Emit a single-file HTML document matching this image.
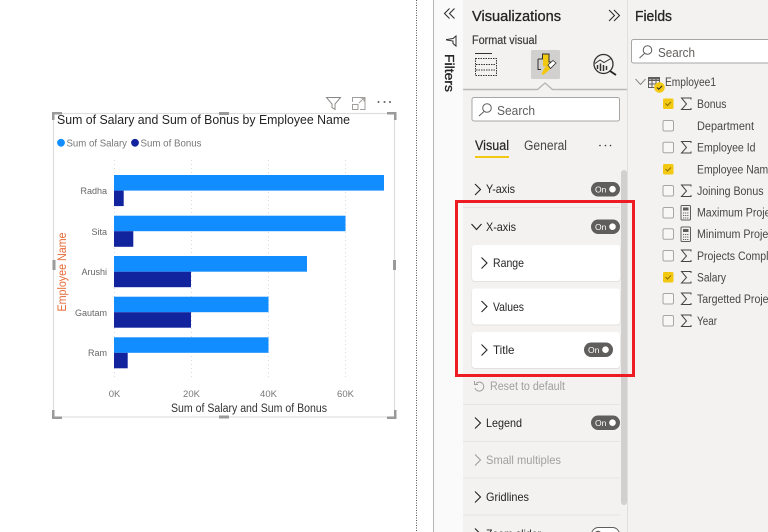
<!DOCTYPE html>
<html><head><meta charset="utf-8"><style>
html,body{margin:0;padding:0;background:#fff}
svg{display:block}
text{font-family:"Liberation Sans",sans-serif}
.t{font-size:12px;fill:#252423}
.f{font-size:11.500px;fill:#484644}
.on{font-size:8.500px;fill:#fff}
.ch{fill:none;stroke:#252423;stroke-width:1.100}
.box{fill:#f8f7f6;stroke:#a8a6a4;stroke-width:1}
.sg{fill:none;stroke:#484644;stroke-width:1}
</style></head><body>
<svg width="768" height="532" viewBox="0 0 768 532" xmlns="http://www.w3.org/2000/svg">
<rect width="768" height="532" fill="#fff"/>
<!-- canvas separator -->
<line x1="416.500" y1="0" x2="416.500" y2="532" stroke="#555" stroke-dasharray="1 1.500"/>
<rect x="433" y="0" width="30" height="532" fill="#fafafa"/>
<line x1="433.500" y1="0" x2="433.500" y2="532" stroke="#b5b5b5"/>
<rect x="463" y="0" width="305" height="532" fill="#f3f2f1"/>
<line x1="627.500" y1="0" x2="627.500" y2="532" stroke="#e1dfdd"/>

<!-- visual header -->
<path d="M326.500 97.500H340.500L335 104V109.500L332 107.500V104Z" fill="none" stroke="#8a8886"/>
<path d="M352.500 102V97.500H365V109.500H360M352.500 104.500H358V109.500H352.500ZM359 103L364 98M360.500 98H364V101.500" fill="none" stroke="#a19f9d"/>
<circle cx="378.500" cy="102" r="1" fill="#605e5c"/><circle cx="384.500" cy="102" r="1" fill="#605e5c"/><circle cx="390" cy="102" r="1" fill="#605e5c"/>

<!-- visual border -->
<rect x="53.500" y="113.500" width="341" height="303.500" fill="#fff" stroke="#dedede" stroke-width="1.200"/>
<g fill="#9a9a9a">
<path d="M52 112H62V114.500H54.500V120H52Z"/>
<path d="M396.500 112H387V114.500H394V120H396.500Z"/>
<path d="M52 419H62V416.500H54.500V410H52Z"/>
<path d="M396.500 419H387V416.500H394V410H396.500Z"/>
<rect x="219" y="112" width="10" height="3"/>
<rect x="219" y="415.500" width="10" height="3"/>
<rect x="52.500" y="260" width="3" height="10"/>
<rect x="393" y="260" width="3" height="10"/>
</g>

<!-- chart text -->
<text x="57" y="124" font-size="13" fill="#252423" textLength="293" lengthAdjust="spacingAndGlyphs">Sum of Salary and Sum of Bonus by Employee Name</text>
<circle cx="61" cy="142.800" r="3.900" fill="#118dff"/>
<text x="66.500" y="146.500" font-size="10.500" fill="#777" textLength="60.500" lengthAdjust="spacingAndGlyphs">Sum of Salary</text>
<circle cx="135" cy="142.800" r="3.900" fill="#12239e"/>
<text x="140.500" y="146.500" font-size="10.500" fill="#777" textLength="61" lengthAdjust="spacingAndGlyphs">Sum of Bonus</text>

<!-- gridlines -->
<g stroke="#dcdcdc" stroke-dasharray="1 3">
<line x1="114.500" y1="160" x2="114.500" y2="380"/>
<line x1="191.500" y1="160" x2="191.500" y2="380"/>
<line x1="268.500" y1="160" x2="268.500" y2="380"/>
<line x1="345.500" y1="160" x2="345.500" y2="380"/>
</g>
<!-- bars -->
<g fill="#118dff">
<rect x="114" y="175" width="270" height="15.600"/>
<rect x="114" y="215.700" width="231.500" height="15.500"/>
<rect x="114" y="256" width="193" height="15.700"/>
<rect x="114" y="296.700" width="154.500" height="15.500"/>
<rect x="114" y="337.300" width="154.500" height="15.500"/>
</g>
<g fill="#12239e">
<rect x="114" y="190.600" width="9.700" height="15.500"/>
<rect x="114" y="231.200" width="19.300" height="15.600"/>
<rect x="114" y="271.700" width="77" height="15.500"/>
<rect x="114" y="312.200" width="77" height="15.500"/>
<rect x="114" y="352.800" width="13.700" height="15.500"/>
</g>
<g font-size="9" fill="#666" text-anchor="end">
<text x="107" y="194">Radha</text>
<text x="107" y="235">Sita</text>
<text x="107" y="275">Arushi</text>
<text x="107" y="316">Gautam</text>
<text x="107" y="356">Ram</text>
</g>
<g font-size="9.500" fill="#777" text-anchor="middle">
<text x="114.500" y="397">0K</text>
<text x="191.500" y="397">20K</text>
<text x="268.500" y="397">40K</text>
<text x="345.500" y="397">60K</text>
</g>
<text x="171" y="412" font-size="11.500" fill="#333" textLength="156" lengthAdjust="spacingAndGlyphs">Sum of Salary and Sum of Bonus</text>
<text transform="translate(66,311.500) rotate(-90)" font-size="11.500" fill="#e66c37" textLength="79" lengthAdjust="spacingAndGlyphs">Employee Name</text>

<!-- filters pane -->
<path d="M449.500 8.500L444.500 13.500L449.500 18.500M454.500 8.500L449.500 13.500L454.500 18.500" fill="none" stroke="#323130" stroke-width="1.100"/>
<path d="M456 36V46L453 43.500V41L446.500 40V39.500L453 38.500Z" fill="none" stroke="#323130"/>
<text transform="translate(445,54) rotate(90)" font-size="13" fill="#252423" stroke="#252423" stroke-width=".35" textLength="38" lengthAdjust="spacingAndGlyphs">Filters</text>

<!-- viz pane head -->
<text x="472" y="21" font-size="15" fill="#252423" stroke="#252423" stroke-width=".3" textLength="89" lengthAdjust="spacingAndGlyphs">Visualizations</text>
<path d="M609 10L614.500 15.500L609 21M614 10L619.500 15.500L614 21" fill="none" stroke="#252423"/>
<text x="472" y="44" font-size="11.500" fill="#3b3a39" stroke="#3b3a39" stroke-width=".2" textLength="65" lengthAdjust="spacingAndGlyphs">Format visual</text>

<!-- tab icons -->
<path d="M475 53.500H492" stroke="#323130" fill="none"/>
<rect x="475.500" y="58.500" width="21" height="17" fill="none" stroke="#323130" stroke-dasharray="1.500 1"/>
<path d="M476 64.500H496M476 70H496" stroke="#323130" fill="none" stroke-dasharray="1.500 1"/>
<rect x="531" y="50" width="29" height="29" rx="1.500" fill="#d2d0ce"/>
<path d="M538 59H542.500V54H549V62H554V65" fill="none" stroke="#323130"/>
<path d="M538 59V69.500H541" fill="none" stroke="#323130"/>
<rect x="543" y="54.500" width="5.500" height="12" fill="#f2c811"/>
<path d="M541.500 74L544 68.500L551 62.500L554 65L547 72L543 75Z" fill="#f2c811"/>
<path d="M548 65L553 60.500L556 63L550.500 68.500Z" fill="#fff" stroke="#323130" stroke-width=".8"/>
<circle cx="603.500" cy="64" r="9.500" fill="none" stroke="#323130" stroke-width="1.300"/>
<path d="M597.500 69V65M600.500 71V63.500M603.500 71V65M606.500 70V66" stroke="#323130" stroke-width="1.500" fill="none"/>
<path d="M595 63.500L600 60L604 62.500L611 58.500" stroke="#323130" fill="none"/>
<path d="M610 71L616 75" stroke="#252423" stroke-width="1.800"/>

<!-- tab line with notch -->
<path d="M463 89.500H537.500L545 83L552.500 89.500H627" fill="#f3f2f1" stroke="#b9b7b5" stroke-width="1.400"/>

<!-- viz search -->
<rect x="472" y="97.500" width="147.500" height="23.500" rx="2" fill="#fff" stroke="#a8a6a4"/>
<circle cx="487" cy="108" r="4.300" fill="none" stroke="#605e5c"/><path d="M484 111.500L479 116" stroke="#605e5c"/>
<text x="497" y="115" font-size="13" fill="#605e5c" textLength="38" lengthAdjust="spacingAndGlyphs">Search</text>

<text x="475" y="150" font-size="13.500" fill="#252423" stroke="#252423" stroke-width=".2" textLength="34" lengthAdjust="spacingAndGlyphs">Visual</text>
<rect x="475" y="156" width="34" height="2" fill="#f2c811"/>
<text x="524" y="150" font-size="13.500" fill="#484644" textLength="43" lengthAdjust="spacingAndGlyphs">General</text>
<circle cx="600" cy="145.500" r=".8" fill="#323130"/><circle cx="605.500" cy="145.500" r=".8" fill="#323130"/><circle cx="610.500" cy="145.500" r=".8" fill="#323130"/>

<!-- scrollbar -->
<rect x="621" y="170" width="6" height="335" rx="3" fill="#d2d0ce"/>

<!-- Y-axis -->
<path class="ch" d="M475 184L480.500 189.500L475 195"/>
<text class="t" x="486" y="193" textLength="29" lengthAdjust="spacingAndGlyphs">Y-axis</text>
<rect x="591" y="182" width="29" height="14.500" rx="7.200" fill="#605e5c"/><text class="on" x="595" y="192.500">On</text><circle cx="612.500" cy="189.200" r="3.300" fill="#fff"/>
<line x1="463" y1="207.500" x2="620" y2="207.500" stroke="#e6e4e2"/>

<!-- X-axis -->
<path class="ch" d="M471.500 224L476.500 229.500L481.500 224"/>
<text class="t" x="486" y="231" textLength="30" lengthAdjust="spacingAndGlyphs">X-axis</text>
<rect x="591" y="219.500" width="29" height="14.500" rx="7.200" fill="#605e5c"/><text class="on" x="595" y="230">On</text><circle cx="612.500" cy="226.700" r="3.300" fill="#fff"/>

<!-- cards -->
<g fill="#e4e2e0">
<rect x="471.500" y="246" width="149" height="36" rx="3"/>
<rect x="471.500" y="289.500" width="149" height="36" rx="3"/>
<rect x="471.500" y="333" width="149" height="36" rx="3"/>
</g>
<g fill="#fff">
<rect x="472" y="245" width="148" height="36" rx="3"/>
<rect x="472" y="288.500" width="148" height="36" rx="3"/>
<rect x="472" y="332" width="148" height="36" rx="3"/>
</g>
<path class="ch" d="M481.500 257.500L487 263L481.500 268.500"/>
<text class="t" x="493" y="267" textLength="31" lengthAdjust="spacingAndGlyphs">Range</text>
<path class="ch" d="M481.500 301L487 306.500L481.500 312"/>
<text class="t" x="493" y="311" textLength="31" lengthAdjust="spacingAndGlyphs">Values</text>
<path class="ch" d="M481.500 344.500L487 350L481.500 355.500"/>
<text class="t" x="493" y="354" textLength="21.500" lengthAdjust="spacingAndGlyphs">Title</text>
<rect x="584" y="342.500" width="29" height="14.500" rx="7.200" fill="#605e5c"/><text class="on" x="588" y="353">On</text><circle cx="605.500" cy="349.700" r="3.300" fill="#fff"/>

<!-- red highlight -->
<rect x="456.500" y="201.500" width="177" height="174" fill="none" stroke="#ed1c24" stroke-width="3"/>

<!-- reset -->
<path d="M476 383.500A4.500 4.500 0 1 1 475 388M474.500 381V384.500H478" fill="none" stroke="#a19f9d"/>
<text x="490" y="390" font-size="11.500" fill="#a19f9d" textLength="75" lengthAdjust="spacingAndGlyphs">Reset to default</text>
<line x1="463" y1="404.500" x2="620" y2="404.500" stroke="#e6e4e2"/>

<!-- Legend -->
<path class="ch" d="M475 417.500L480.500 423L475 428.500"/>
<text class="t" x="486" y="427" textLength="36" lengthAdjust="spacingAndGlyphs">Legend</text>
<rect x="591" y="415.500" width="29" height="14.500" rx="7.200" fill="#605e5c"/><text class="on" x="595" y="426">On</text><circle cx="612.500" cy="422.700" r="3.300" fill="#fff"/>
<line x1="463" y1="441.500" x2="620" y2="441.500" stroke="#e6e4e2"/>

<path d="M475 454.500L480.500 460L475 465.500" fill="none" stroke="#a19f9d" stroke-width="1.100"/>
<text x="486" y="464" font-size="12" fill="#a19f9d" textLength="75" lengthAdjust="spacingAndGlyphs">Small multiples</text>
<line x1="463" y1="478" x2="620" y2="478" stroke="#e6e4e2"/>

<path class="ch" d="M475 491.500L480.500 497L475 502.500"/>
<text class="t" x="486" y="501" textLength="43" lengthAdjust="spacingAndGlyphs">Gridlines</text>
<line x1="463" y1="515" x2="620" y2="515" stroke="#e6e4e2"/>

<path class="ch" d="M475 528.500L480.500 534"/>
<text class="t" x="486" y="538" textLength="55" lengthAdjust="spacingAndGlyphs">Zoom slider</text>
<rect x="591.500" y="527.500" width="28" height="14" rx="7" fill="#fff" stroke="#605e5c"/><circle cx="598" cy="534" r="3.300" fill="#605e5c"/>

<!-- Fields -->
<text x="635" y="21" font-size="15" fill="#252423" stroke="#252423" stroke-width=".3" textLength="37" lengthAdjust="spacingAndGlyphs">Fields</text>
<rect x="631.500" y="39.500" width="150" height="23.500" rx="2" fill="#fff" stroke="#a8a6a4"/>
<circle cx="647.500" cy="50" r="4.300" fill="none" stroke="#605e5c"/><path d="M644.500 53.500L639.500 58" stroke="#605e5c"/>
<text x="658" y="57" font-size="13" fill="#605e5c" textLength="37" lengthAdjust="spacingAndGlyphs">Search</text>

<path d="M635.500 79L640.500 84.500L645.500 79" fill="none" stroke="#8a8886"/>
<rect x="648.500" y="77.500" width="11" height="10" fill="none" stroke="#605e5c"/>
<path d="M648.500 80.500H659.500M648.500 84H659.500M652 78V88M656 78V88" stroke="#605e5c" fill="none"/>
<rect x="648.500" y="77" width="11" height="2.500" fill="#605e5c"/>
<circle cx="659.500" cy="87.500" r="5.300" fill="#f2c811"/>
<path d="M657 87.500L658.800 89.300L662 86" fill="none" stroke="#252423"/>
<text class="f" x="665" y="86" textLength="51" lengthAdjust="spacingAndGlyphs">Employee1</text>

<!-- checkboxes -->
<g>
<rect x="663" y="98.500" width="10.500" height="10.500" rx="1.500" fill="#f2c811"/><path d="M665.500 103.500L667.500 105.500L671 102" fill="none" stroke="#8a6d00"/>
<rect class="box" x="663" y="120.500" width="10.500" height="10.500" rx="1.500"/>
<rect class="box" x="663" y="142.200" width="10.500" height="10.500" rx="1.500"/>
<rect x="663" y="164" width="10.500" height="10.500" rx="1.500" fill="#f2c811"/><path d="M665.500 169L667.500 171L671 167.500" fill="none" stroke="#8a6d00"/>
<rect class="box" x="663" y="185.500" width="10.500" height="10.500" rx="1.500"/>
<rect class="box" x="663" y="207.500" width="10.500" height="10.500" rx="1.500"/>
<rect class="box" x="663" y="228.800" width="10.500" height="10.500" rx="1.500"/>
<rect class="box" x="663" y="250.500" width="10.500" height="10.500" rx="1.500"/>
<rect x="663" y="272" width="10.500" height="10.500" rx="1.500" fill="#f2c811"/><path d="M665.500 277L667.500 279L671 275.500" fill="none" stroke="#8a6d00"/>
<rect class="box" x="663" y="293.500" width="10.500" height="10.500" rx="1.500"/>
<rect class="box" x="663" y="315.500" width="10.500" height="10.500" rx="1.500"/>
</g>
<!-- sigma icons -->
<g class="sg">
<path d="M691 99.500V98H681.500L686.500 104L681.500 109.500H691V108"/>
<path d="M691 143V141.500H681.500L686.500 147.500L681.500 153H691V151.500"/>
<path d="M691 186.500V185H681.500L686.500 191L681.500 196.500H691V195"/>
<path d="M691 251.500V250H681.500L686.500 256L681.500 261.500H691V260"/>
<path d="M691 273V271.500H681.500L686.500 277.500L681.500 283H691V281.500"/>
<path d="M691 294.500V293H681.500L686.500 299L681.500 304.500H691V303"/>
<path d="M691 316.500V315H681.500L686.500 321L681.500 326.500H691V325"/>
</g>
<!-- calculators -->
<g>
<rect x="681" y="205.500" width="9.500" height="14.500" rx="1" fill="none" stroke="#605e5c"/>
<rect x="683" y="207.500" width="5.500" height="3" fill="#605e5c"/>
<path d="M683 213H688.500M683 215.500H688.500M683 218H688.500" stroke="#605e5c" stroke-dasharray="1.200 .9"/>
<rect x="681" y="227" width="9.500" height="14.500" rx="1" fill="none" stroke="#605e5c"/>
<rect x="683" y="229" width="5.500" height="3" fill="#605e5c"/>
<path d="M683 234.500H688.500M683 237H688.500M683 239.500H688.500" stroke="#605e5c" stroke-dasharray="1.200 .9"/>
</g>
<g>
<text class="f" x="697" y="108" textLength="29.500" lengthAdjust="spacingAndGlyphs">Bonus</text>
<text class="f" x="697" y="130" textLength="57" lengthAdjust="spacingAndGlyphs">Department</text>
<text class="f" x="697" y="151.500" textLength="58.500" lengthAdjust="spacingAndGlyphs">Employee Id</text>
<text class="f" x="697" y="173.500" textLength="77" lengthAdjust="spacingAndGlyphs">Employee Name</text>
<text class="f" x="697" y="195" textLength="66.500" lengthAdjust="spacingAndGlyphs">Joining Bonus</text>
<text class="f" x="697" y="216.500" textLength="87" lengthAdjust="spacingAndGlyphs">Maximum Projects</text>
<text class="f" x="697" y="238" textLength="85" lengthAdjust="spacingAndGlyphs">Minimum Projects</text>
<text class="f" x="697" y="260" textLength="92" lengthAdjust="spacingAndGlyphs">Projects Completed</text>
<text class="f" x="697" y="281.500" textLength="29" lengthAdjust="spacingAndGlyphs">Salary</text>
<text class="f" x="697" y="303" textLength="85" lengthAdjust="spacingAndGlyphs">Targetted Projects</text>
<text class="f" x="697" y="325" textLength="20" lengthAdjust="spacingAndGlyphs">Year</text>
</g>
</svg>
</body></html>
